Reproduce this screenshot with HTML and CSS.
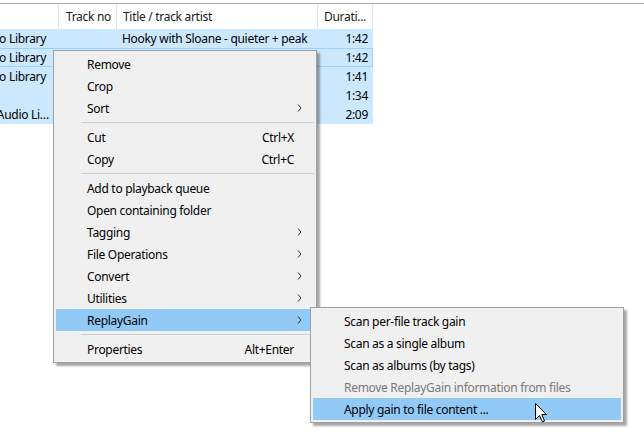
FILE: index.html
```html
<!DOCTYPE html>
<html>
<head>
<meta charset="utf-8">
<link rel="stylesheet" href="styles.css">
</head>
<body>
<div class="view">
  <div class="scroll">
    <div class="header">
      <div class="hcell"></div>
      <div class="hcell right">Track no</div>
      <div class="hcell">Title / track artist</div>
      <div class="hcell">Durati...</div>
    </div>
    <div class="row sel">
      <div class="cell clip">Tests Audio Library</div>
      <div class="cell"></div>
      <div class="cell">Hooky with Sloane - quieter + peak</div>
      <div class="cell right">1:42</div>
    </div>
    <div class="row sel focus">
      <div class="cell clip">Tests Audio Library</div>
      <div class="cell"></div>
      <div class="cell"></div>
      <div class="cell right">1:42</div>
    </div>
    <div class="row sel">
      <div class="cell clip">Tests Audio Library</div>
      <div class="cell"></div>
      <div class="cell"></div>
      <div class="cell right">1:41</div>
    </div>
    <div class="row sel">
      <div class="cell clip"></div>
      <div class="cell"></div>
      <div class="cell"></div>
      <div class="cell right">1:34</div>
    </div>
    <div class="row sel">
      <div class="cell clip">Example: Audio Library</div>
      <div class="cell"></div>
      <div class="cell"></div>
      <div class="cell right">2:09</div>
    </div>
  </div>
</div>

<div class="menu main">
  <div class="item">Remove</div>
  <div class="item">Crop</div>
  <div class="item">Sort<svg class="arrow" width="5" height="8" viewBox="0 0 5 8"><path d="M1 0.5 L4 4 L1 7.5" fill="none" stroke="#333" stroke-width="1"/></svg></div>
  <div class="sep"></div>
  <div class="item">Cut<span class="key">Ctrl+X</span></div>
  <div class="item">Copy<span class="key">Ctrl+C</span></div>
  <div class="sep"></div>
  <div class="item">Add to playback queue</div>
  <div class="item">Open containing folder</div>
  <div class="item">Tagging<svg class="arrow" width="5" height="8" viewBox="0 0 5 8"><path d="M1 0.5 L4 4 L1 7.5" fill="none" stroke="#333" stroke-width="1"/></svg></div>
  <div class="item">File Operations<svg class="arrow" width="5" height="8" viewBox="0 0 5 8"><path d="M1 0.5 L4 4 L1 7.5" fill="none" stroke="#333" stroke-width="1"/></svg></div>
  <div class="item">Convert<svg class="arrow" width="5" height="8" viewBox="0 0 5 8"><path d="M1 0.5 L4 4 L1 7.5" fill="none" stroke="#333" stroke-width="1"/></svg></div>
  <div class="item">Utilities<svg class="arrow" width="5" height="8" viewBox="0 0 5 8"><path d="M1 0.5 L4 4 L1 7.5" fill="none" stroke="#333" stroke-width="1"/></svg></div>
  <div class="item hot">ReplayGain<svg class="arrow" width="5" height="8" viewBox="0 0 5 8"><path d="M1 0.5 L4 4 L1 7.5" fill="none" stroke="#333" stroke-width="1"/></svg></div>
  <div class="sep"></div>
  <div class="item">Properties<span class="key">Alt+Enter</span></div>
</div>

<div class="menu submenu">
  <div class="item">Scan per-file track gain</div>
  <div class="item">Scan as a single album</div>
  <div class="item">Scan as albums (by tags)</div>
  <div class="item disabled">Remove ReplayGain information from files</div>
  <div class="item hot">Apply gain to file content ...</div>
</div>

<svg class="cursor" width="13" height="20" viewBox="0 0 13 20">
  <path d="M0.5 0.5 L0.5 16.5 L4.5 12.5 L7.5 19 L9.5 18 L6.8 11.5 L11.5 11.5 Z" fill="#fff" stroke="#000" stroke-width="1"/>
</svg>
</body>
</html>
```

FILE: styles.css
```css
html, body {
  margin: 0;
  padding: 0;
}
body {
  width: 644px;
  height: 441px;
  overflow: hidden;
  position: relative;
  background: #fff;
  font-family: "Noto Sans", "Open Sans", sans-serif;
  font-size: 12px;
  letter-spacing: -0.3px;
  color: #000;
}
.view {
  margin-top: 3px;
  border-top: 1px solid #a9a9a9;
  overflow: hidden;
}
.scroll {
  margin-left: -60px;
  --cols: 119px 58px 201px 55px;
}
.header {
  display: grid;
  grid-template-columns: var(--cols);
  height: 25px;
}
.hcell {
  border-right: 1px solid #e5e5e5;
  padding: 0 6px;
  display: flex;
  align-items: center;
  white-space: nowrap;
  overflow: hidden;
  color: #1a1a1a;
}
.hcell.right {
  justify-content: flex-end;
  padding-right: 5px;
}
.row {
  display: grid;
  grid-template-columns: var(--cols);
  width: max-content;
  height: 19px;
  box-sizing: border-box;
}
.row.sel {
  background: #cce8ff;
}
.row.focus {
  outline: 1px solid #99d1ff;
  outline-offset: -1px;
}
.cell {
  padding: 0 5px;
  display: flex;
  align-items: center;
  white-space: nowrap;
  overflow: hidden;
}
.cell.clip {
  display: block;
  line-height: 19px;
  text-overflow: ellipsis;
}
.cell.right {
  justify-content: flex-end;
}

.menu {
  position: absolute;
  box-sizing: border-box;
  background: #f0f0f0;
  border: 1px solid #a0a0a0;
  padding: 2px;
  box-shadow: 3px 3px 2px rgba(0, 0, 0, 0.35);
}
.main {
  left: 53px;
  top: 50px;
  width: 264px;
}
.submenu {
  left: 310px;
  top: 307px;
  width: 314px;
}
.item {
  height: 22px;
  display: flex;
  align-items: center;
  padding-left: 31px;
  padding-right: 20px;
  white-space: nowrap;
}
.item.hot {
  background: #91c9f7;
}
.item.disabled {
  color: #7a7a7a;
}
.key {
  margin-left: auto;
}
.arrow {
  margin-left: auto;
  margin-right: -8px;
}
.sep {
  height: 7px;
  display: flex;
  align-items: center;
  padding-left: 25px;
}
.sep::before {
  content: "";
  flex: 1;
  border-top: 1px solid #cdcdcd;
}
.cursor {
  position: absolute;
  left: 535px;
  top: 403px;
}
```
